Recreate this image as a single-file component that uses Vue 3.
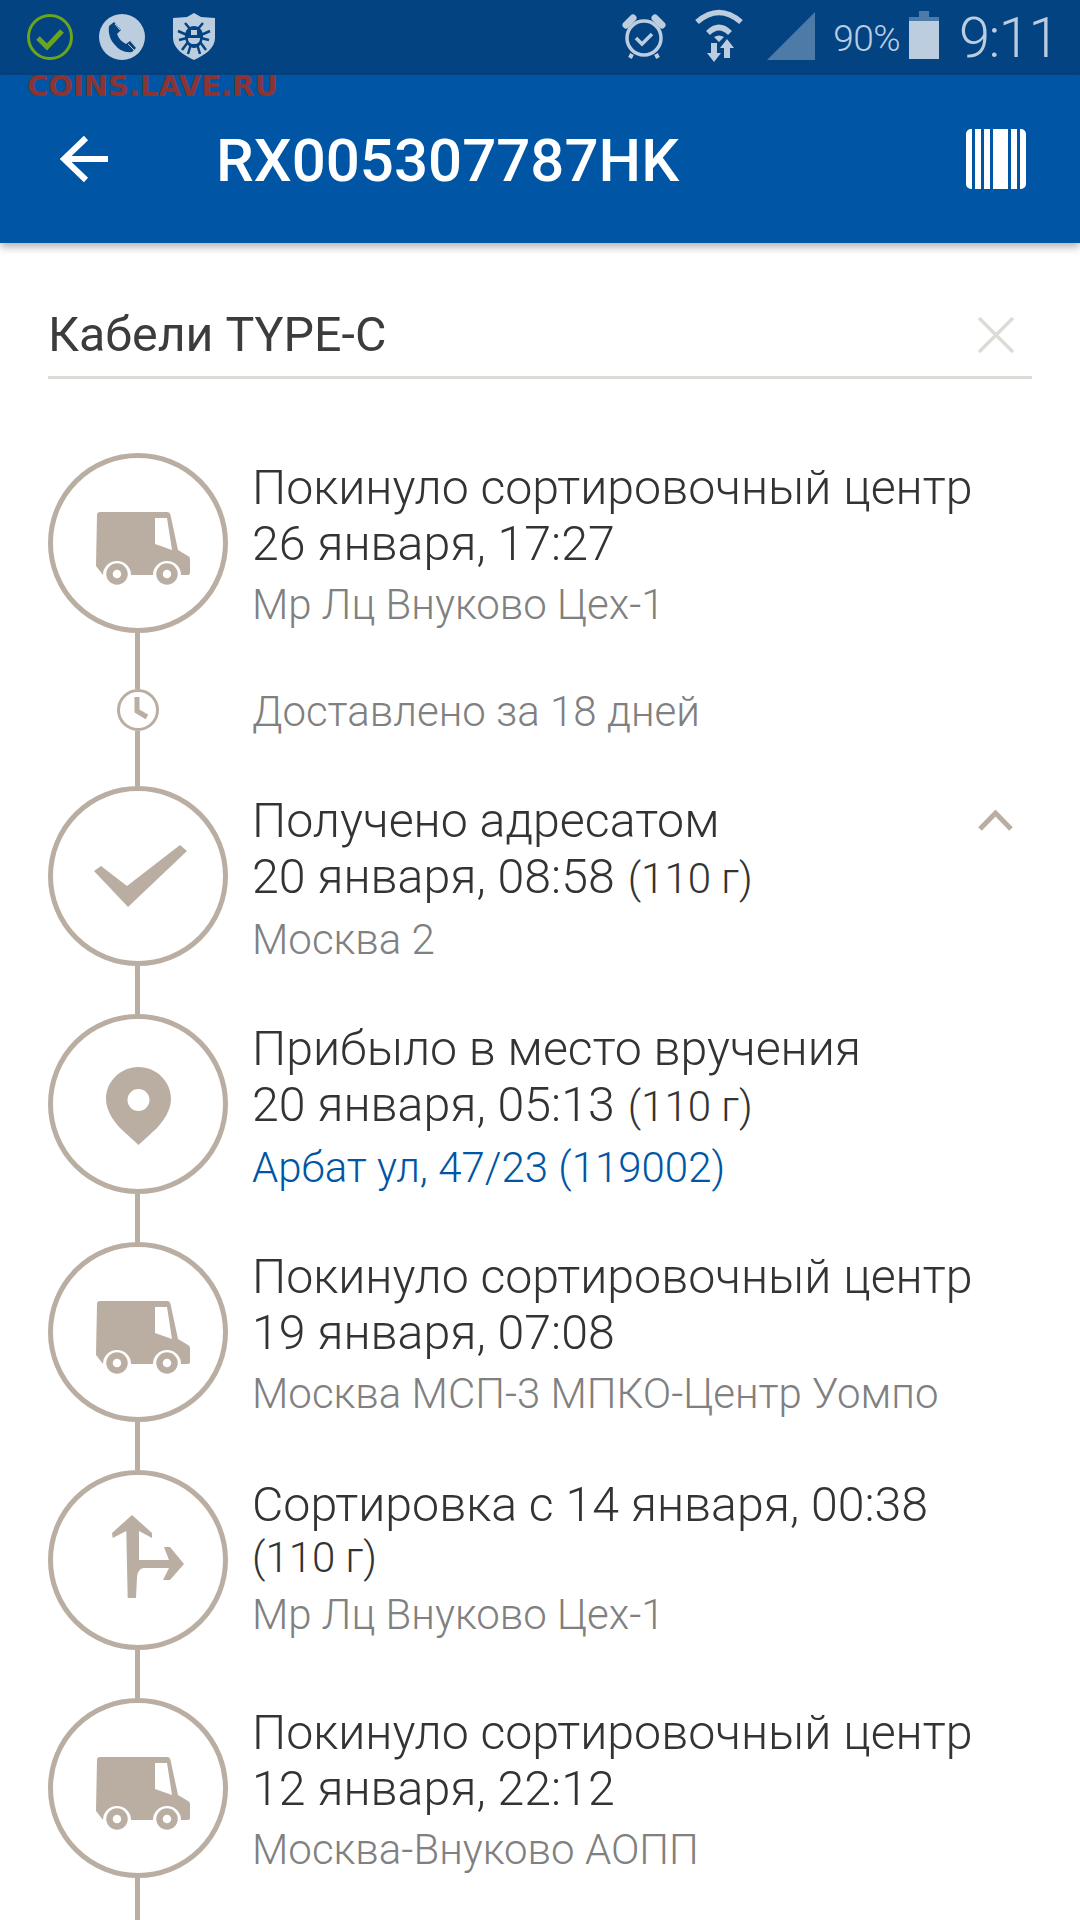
<script setup>
const events = [
  { icon: 'truck', title: 'Покинуло сортировочный центр', date: '26 января, 17:27', place: 'Мр Лц Внуково Цех-1', after: 'Доставлено за 18 дней' },
  { icon: 'check', title: 'Получено адресатом', date: '20 января, 08:58', weight: '(110 г)', place: 'Москва 2', chevron: true },
  { icon: 'pin', title: 'Прибыло в место вручения', date: '20 января, 05:13', weight: '(110 г)', place: 'Арбат ул, 47/23 (119002)', link: true },
  { icon: 'truck', title: 'Покинуло сортировочный центр', date: '19 января, 07:08', place: 'Москва МСП-3 МПКО-Центр Уомпо' },
  { icon: 'sort', title: 'Сортировка с 14 января, 00:38', weightLine: '(110 г)', place: 'Мр Лц Внуково Цех-1' },
  { icon: 'truck', title: 'Покинуло сортировочный центр', date: '12 января, 22:12', place: 'Москва-Внуково АОПП' },
]
</script>

<template>
  <div class="screen">
    <div class="status">
      <div class="status-left">
        <svg width="46" height="46" viewBox="0 0 46 46"><circle cx="23" cy="23" r="21.500" fill="none" stroke="#6aa51c" stroke-width="3"/><path d="M11 24l9 9 15-16" fill="none" stroke="#6aa51c" stroke-width="5"/></svg>
        <svg width="46" height="46" viewBox="0 0 46 46"><circle cx="23" cy="23" r="23" fill="#bccde0"/><path d="M10 12l5-4 7 8-4 4c2 5 5 8 9 10l4-3 6 7-4 4c-7 1-13-2-17-7-5-5-7-12-6-19z" fill="#044382"/><path d="M16 10l5 6M29 30l6 6" stroke="#bccde0" stroke-width="1"/></svg>
        <svg class="shield" width="42" height="47" viewBox="0 0 42 47"><path d="M21 0l7 4 14 1v20c0 10-10 17-21 22C10 42 0 35 0 25V5l14-1z" fill="#bccde0"/><path d="M12 10l6 7M30 10l-6 7M5 18l9 4M37 18l-9 4M6 27l8-2M36 27l-8-2M9 37l6-8M33 37l-6-8M15 41l3-10M27 41l-3-10" stroke="#044382" stroke-width="2.500"/><path d="M12 23c0-6 4-10 9-10s9 4 9 10c0 7-4 12-9 12s-9-5-9-12z" fill="#044382"/><path d="M15 25h12c0 4-2 6-6 6s-6-2-6-6zM18 17h6v5h-6z" fill="#bccde0"/></svg>
      </div>
      <div class="status-right">
        <svg class="alarm" width="44" height="47" viewBox="0 0 44 47"><path d="M4 12l7-7M40 12l-7-7" stroke="#bccde0" stroke-width="7" stroke-linecap="round"/><circle cx="22" cy="25" r="17" fill="none" stroke="#bccde0" stroke-width="3.500"/><path d="M14 25l6 6 10-10" fill="none" stroke="#bccde0" stroke-width="3.500"/><path d="M10 41l-2 4M34 41l2 4" stroke="#bccde0" stroke-width="4"/></svg>
        <svg class="wifi" width="50" height="53" viewBox="0 0 50 53"><path d="M3 13Q25-6 47 13M14 24Q25 13 36 24" fill="none" stroke="#bccde0" stroke-width="5.500"/><path d="M20 28q5-3 10 0l-5 5z" fill="#bccde0"/><path d="M17 34h6v10h4l-7 9-7-9h4zM33 30l7 9h-4v10h-6V39h-4z" fill="#bccde0"/></svg>
        <svg class="signal" width="48" height="48" viewBox="0 0 48 48"><path d="M48 0v48H0z" fill="#4d7aa6"/></svg>
        <span class="pct">90%</span>
        <svg class="batt" width="30" height="48" viewBox="0 0 30 48"><path d="M10 0h10v6h10v4H0V6h10z" fill="#4d7aa6"/><path d="M0 10h30v38H0z" fill="#bccde0"/></svg>
        <span class="time">9:11</span>
      </div>
    </div>
    <div class="watermark">COINS.LAVE.RU</div>
    <header class="bar">
      <svg class="back" width="48" height="48" viewBox="0 0 48 48"><path d="M48 24H4M26 3L4 24l22 21" fill="none" stroke="#fff" stroke-width="6"/></svg>
      <h1 class="code">RX005307787HK</h1>
      <svg width="60" height="60" viewBox="0 0 60 60"><path d="M6 0v60H5a5 5 0 0 1-5-5V5a5 5 0 0 1 5-5zM9 0h6v60H9zM18 0h6v60h-6zM27 0h15v60H27zM45 0h6v60h-6zM54 0h1a5 5 0 0 1 5 5v50a5 5 0 0 1-5 5h-1z" fill="#fff"/></svg>
    </header>
    <div class="name-row">
      <span class="name">Кабели TYPE-C</span>
      <svg width="36" height="36" viewBox="0 0 36 36"><path d="M1 1l34 34M35 1L1 35" stroke="#dcdcd6" stroke-width="3.500" fill="none"/></svg>
    </div>
    <div class="list">
      <template v-for="(e, i) in events" :key="i">
        <div class="event">
          <div class="circle">
            <svg v-if="e.icon === 'truck'" class="i-truck" width="94" height="73" viewBox="0 0 94 73">
              <path d="M1 3a3 3 0 0 1 3-3H71c2 0 3 1 3.500 3L82 38l10 6c1 .6 2 1.500 2 3v14c0 1-1 2-2 2h-7A14 14 0 0 0 57 63H35A14 14 0 0 0 7 63l-7-9zM59 6v26l17 6-5-32z" fill="#baaea2" fill-rule="evenodd"/>
              <circle cx="21" cy="62" r="7.500" fill="none" stroke="#baaea2" stroke-width="6.500"/>
              <circle cx="71" cy="62" r="7.500" fill="none" stroke="#baaea2" stroke-width="6.500"/>
            </svg>
            <svg v-else-if="e.icon === 'check'" class="i-check" width="93" height="62" viewBox="0 0 93 62"><path d="M0 26l7-5 26 20L86 0l7 6-59 56z" fill="#baaea2"/></svg>
            <svg v-else-if="e.icon === 'pin'" class="i-pin" width="65" height="78" viewBox="0 0 65 78"><path d="M32.500 0C14.500 0 0 14.500 0 32c0 12 8 22 14 29l18.500 17 18.500-17c6-7 14-17 14-29C65 14.500 50.500 0 32.500 0zm0 22a11 11 0 1 1 0 22 11 11 0 0 1 0-22z" fill="#baaea2" fill-rule="evenodd"/></svg>
            <svg v-else class="i-sort" width="72" height="83" viewBox="0 0 72 83"><path d="M20 0L0 18l.7 5L14.300 16l1.400 67H24l1-21c.5-5 3-9 7-9h25l-6 12h7l14-16-14-17h-6l5 13H27V16l13 7v-5z" fill="#baaea2"/></svg>
          </div>
          <div class="text">
            <div class="line">{{ e.title }}<svg v-if="e.chevron" class="chev" width="35" height="22" viewBox="0 0 35 22"><path d="M2 20L17.500 4 33 20" fill="none" stroke="#baaea2" stroke-width="5"/></svg></div>
            <div class="line" v-if="e.date">{{ e.date }}<span v-if="e.weight" class="w">{{ e.weight }}</span></div>
            <div class="wline" v-if="e.weightLine">{{ e.weightLine }}</div>
            <div class="place" :class="{ link: e.link }">{{ e.place }}</div>
          </div>
        </div>
        <div v-if="e.after" class="after">
          <div class="rail">
            <div class="stem"></div>
            <svg width="42" height="42" viewBox="0 0 42 42"><circle cx="21" cy="21" r="19.500" fill="#fff" stroke="#baaea2" stroke-width="3"/><path d="M20 8v14l10 6" fill="none" stroke="#baaea2" stroke-width="5"/></svg>
            <div class="stem"></div>
          </div>
          <span class="after-text">{{ e.after }}</span>
        </div>
        <div v-else class="link-line"></div>
      </template>
    </div>
  </div>
</template>

<style>
html, body { margin: 0; background: #fff; }
</style>

<style scoped>
.screen { width: 1080px; height: 1920px; overflow: hidden; position: relative; background: #fff; font-family: Roboto, sans-serif; font-weight: 300; }
.status { height: 75px; background: #044382; display: flex; justify-content: space-between; padding: 0 22px 0 27px; box-sizing: border-box; }
.status-left { display: flex; gap: 26px; padding-top: 14px; }
.shield { margin-left: 2px; margin-top: -1px; }
.status-right { display: flex; align-items: flex-start; color: #bccde0; }
.alarm { margin-top: 13px; margin-right: 28px; }
.wifi { margin-top: 9px; margin-right: 23px; }
.signal { margin-top: 12px; margin-right: 18px; }
.pct { font-size: 37px; line-height: 44px; margin-top: 17px; margin-right: 9px; letter-spacing: -.5px; }
.batt { margin-top: 11px; margin-right: 20px; }
.time { font-size: 56px; line-height: 64px; margin-top: 6px; letter-spacing: -1.500px; }
.watermark { position: absolute; z-index: 2; left: 27px; top: 71px; font-family: "DejaVu Sans", sans-serif; font-weight: 700; font-size: 29px; line-height: 30px; color: #8a3434; }
.bar { height: 168px; background: #0056a4; display: flex; align-items: center; padding: 0 54px 0 60px; box-sizing: border-box; box-shadow: 0 4px 8px rgba(0,0,0,.3); position: relative; }
.back { margin-right: 108px; }
.code { flex: 1; margin: 0; padding-top: 3px; font-size: 60px; font-weight: 500; color: #fff; line-height: 70px; }
.name-row { margin: 36px 48px 0; height: 83px; padding: 14px 18px 0 0; border-bottom: 3px solid #dcdcd6; display: flex; align-items: center; justify-content: space-between; }
.name { font-size: 48.300px; font-weight: 400; color: #3c3c3c; }
.list { margin-top: 74px; padding: 0 48px; }
.event { display: flex; height: 180px; }
.circle { width: 180px; height: 180px; border: 5px solid #baaea2; border-radius: 50%; box-sizing: border-box; display: flex; align-items: center; justify-content: center; flex: none; }
.i-truck { margin: 11px 0 0 10px; }
.i-check { margin-left: 4px; }
.i-pin { margin-top: 4px; }
.i-sort { margin: 0 0 7px 19px; }
.text { margin-left: 24px; flex: 1; position: relative; padding-top: 7px; }
.line { font-size: 48.250px; line-height: 56px; color: #333; white-space: nowrap; }
.w { font-size: 42px; margin-left: 13px; }
.wline { font-size: 42px; line-height: 49px; color: #333; }
.place { font-size: 42px; line-height: 66px; color: #808080; white-space: nowrap; }
.place.link { color: #0056a4; }
.chev { position: absolute; right: 19px; top: 23px; }
.link-line { width: 5px; height: 48px; background: #baaea2; margin-left: 87px; }
.after { display: flex; height: 153px; }
.rail { width: 180px; display: flex; flex-direction: column; align-items: center; flex: none; }
.stem { width: 5px; flex: 1; background: #baaea2; margin-left: -1px; }
.after-text { margin-left: 24px; font-size: 42px; line-height: 158px; color: #808080; }
</style>
